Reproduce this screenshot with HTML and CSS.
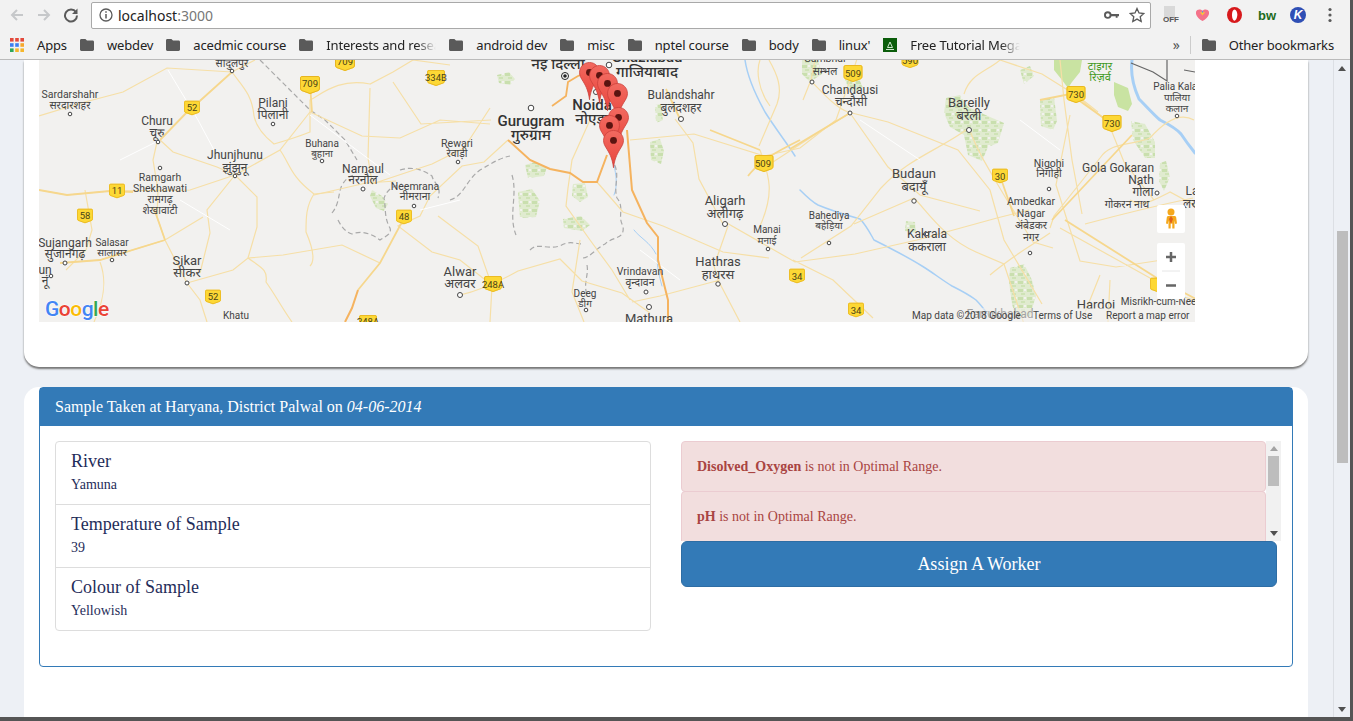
FILE: index.html
```html
<!DOCTYPE html>
<html lang="en">
<head>
    <meta charset="UTF-8">
    <meta name="viewport" content="width=device-width, initial-scale=1.0">
    <title>Water samples</title>
    <link rel="stylesheet" href="styles.css">
</head>
<body>
    <svg class="defs" width="0" height="0">
        <defs>
            <linearGradient id="pin-fill" x1="0" y1="0" x2="0" y2="1">
                <stop offset="0" stop-color="#f26a60"/>
                <stop offset="1" stop-color="#e8443c"/>
            </linearGradient>
            <pattern id="speck" width="9" height="8" patternUnits="userSpaceOnUse">
                <rect width="9" height="8" fill="#e0ebcf"/>
                <rect x="1" y="1" width="5" height="3" fill="#c9dfae"/>
                <rect x="4" y="5" width="4" height="2" fill="#cfe3b6"/>
                <rect x="7" y="1" width="2" height="2" fill="#f2f1ef"/>
            </pattern>
        </defs>
        <symbol id="folder" viewBox="0 0 14 12"><path d="M1.400 0h4l1.600 1.600h5.600c.8 0 1.400.6 1.400 1.400v7.600c0 .8-.6 1.400-1.400 1.400H1.400C.6 12 0 11.400 0 10.600V1.400C0 .6.600 0 1.400 0z" fill="#5a5a5a"/></symbol>
        <symbol id="shield" viewBox="0 0 20 18"><path d="M2 0h16c1 0 2 1 2 2v10c0 2-1 3-3 3.500L10 18 3 15.500C1 15 0 14 0 12V2C0 1 1 0 2 0z" fill="#fdd835"/><path d="M2 .5h16c.8 0 1.500.7 1.500 1.500v10c0 1.700-.8 2.600-2.600 3L10 17.500 3.100 15C1.300 14.600.5 13.700.5 12V2C.5 1.200 1.200.5 2 .5z" fill="none" stroke="#e6b422"/></symbol>
        <symbol id="pin" viewBox="0 0 22 40"><path d="M11 .5C5.200.5.500 5.200.500 11c0 3 1.100 5 2.700 7.700 2.700 4.400 6.500 10 7.800 21 1.300-11 5.100-16.600 7.800-21 1.600-2.700 2.700-4.700 2.700-7.700C21.500 5.200 16.800.5 11 .5z" fill="url(#pin-fill)" stroke="#c9403a" stroke-width=".8"/><circle cx="11" cy="11" r="3.600" fill="#5a1410"/></symbol>
    </svg>

    <header class="toolbar">
        <svg class="nav-icon nav-back" viewBox="0 0 16 16"><path d="M14 8H3M8 3 3 8l5 5" fill="none" stroke="#c6c8ca" stroke-width="2"/></svg>
        <svg class="nav-icon nav-forward" viewBox="0 0 16 16"><path d="M2 8h11M8 3l5 5-5 5" fill="none" stroke="#c6c8ca" stroke-width="2"/></svg>
        <svg class="nav-icon nav-reload" viewBox="0 0 16 16"><path d="M13 5.200A6 6 0 1 0 14 8.500" fill="none" stroke="#5a5a5a" stroke-width="2"/><path d="M14.500 1.500v5.500H9z" fill="#5a5a5a"/></svg>
        <div class="omnibox">
            <svg class="omni-info" viewBox="0 0 14 14"><circle cx="7" cy="7" r="6" fill="none" stroke="#5a5a5a" stroke-width="1.300"/><path d="M7 6v4.500M7 3.300v1.500" stroke="#5a5a5a" stroke-width="1.500"/></svg>
            <span class="omni-url">localhost<span class="omni-port">:3000</span></span>
            <svg class="omni-key" viewBox="0 0 16 10"><circle cx="4" cy="5" r="3" fill="none" stroke="#5a5a5a" stroke-width="2"/><path d="M7 4h9v2.200h-1.500V8h-2V6.200H7z" fill="#5a5a5a"/></svg>
            <svg class="omni-star" viewBox="0 0 16 16"><path d="m8 1.500 2 4.500 4.800.5-3.600 3.200 1 4.800L8 12.100l-4.200 2.400 1-4.800L1.200 6.500 6 6z" fill="none" stroke="#5a5a5a" stroke-width="1.300"/></svg>
        </div>
        <div class="extensions">
            <div class="ext-off"><span class="ext-off-page"></span><span class="ext-off-label">OFF</span></div>
            <svg class="ext-heart" viewBox="0 0 14 13"><path d="M0 3c1-3 5-3 7-1 2-2 6-2 7 1 1 4-3 8-7 10C3 11-1 7 0 3z" fill="#f4728a"/><path d="M4 3.500 7 7l3-3.500z" fill="#f9c23c"/><path d="M7 2v2" stroke="#4aa3df"/></svg>
            <svg class="ext-opera" viewBox="0 0 16 17"><ellipse cx="8" cy="8.500" rx="8" ry="8.500" fill="#d7191c"/><path d="M5.300 8.500C5.300 5 6.500 2.500 8 2.500c1.500 0 3 2.500 3 5.500 0 3.500-1.500 6.500-3 6.500S5.300 12 5.300 8.500z" fill="#fff"/></svg>
            <span class="ext-bw">bw</span>
            <span class="ext-k">K</span>
            <svg class="ext-menu" viewBox="0 0 4 16"><circle cx="2" cy="2.500" r="1.600"/><circle cx="2" cy="8" r="1.600"/><circle cx="2" cy="13.500" r="1.600"/></svg>
        </div>
    </header>

    <nav class="bookmarks">
        <a class="bookmark bookmark-apps">
            <svg class="apps-grid" viewBox="0 0 14 14">
                <rect width="3.600" height="3.600" fill="#e3493b"/><rect x="5.200" width="3.600" height="3.600" fill="#e3493b"/><rect x="10.400" width="3.600" height="3.600" fill="#e3493b"/>
                <rect y="5.200" width="3.600" height="3.600" fill="#3d7ff0"/><rect x="5.200" y="5.200" width="3.600" height="3.600" fill="#3d7ff0"/><rect x="10.400" y="5.200" width="3.600" height="3.600" fill="#f6a72c"/>
                <rect y="10.400" width="3.600" height="3.600" fill="#2fa75a"/><rect x="5.200" y="10.400" width="3.600" height="3.600" fill="#f6b72c"/><rect x="10.400" y="10.400" width="3.600" height="3.600" fill="#f6b72c"/>
            </svg>
            Apps
        </a>
        <a class="bookmark"><svg class="folder"><use href="#folder"/></svg>webdev</a>
        <a class="bookmark"><svg class="folder"><use href="#folder"/></svg>acedmic course</a>
        <a class="bookmark"><svg class="folder"><use href="#folder"/></svg><span class="fade">Interests and research</span></a>
        <a class="bookmark"><svg class="folder"><use href="#folder"/></svg>android dev</a>
        <a class="bookmark"><svg class="folder"><use href="#folder"/></svg>misc</a>
        <a class="bookmark"><svg class="folder"><use href="#folder"/></svg>nptel course</a>
        <a class="bookmark"><svg class="folder"><use href="#folder"/></svg>body</a>
        <a class="bookmark"><svg class="folder"><use href="#folder"/></svg>linux'</a>
        <a class="bookmark">
            <svg class="site-icon" viewBox="0 0 14 14"><rect width="14" height="14" fill="#0b5d0b"/><path d="M4.500 9.500 7 4l2.500 5.500zM3 11.500h8" fill="none" stroke="#cfe8cf"/></svg>
            <span class="fade">Free Tutorial Mega</span>
        </a>
        <span class="bookmarks-more">»</span>
        <span class="bookmarks-sep"></span>
        <a class="bookmark bookmark-other"><svg class="folder"><use href="#folder"/></svg>Other bookmarks</a>
    </nav>

    <div class="viewport">
        <main class="page">
            <section class="card card-map">
                <svg class="map" viewBox="39 60 1156 262" width="1156" height="262">
                    <rect x="39" y="60" width="1156" height="262" fill="#f2f1ef"/>

                    <!-- green -->
                    <g fill="url(#speck)">
                        <path d="M497 75l12-3 6 7-5 6-11-2zM525 165l10-3 12 5-3 9-16 2zM518 192l14-3 8 12-4 16-16 1zM573 184l12-1 3 14-8 5-8-6zM563 219l18-3 9 9-8 6-18-3zM650 142l10-3 4 12-3 13-10-4zM655 105l6-1 2 16-7 3zM372 190l10 6 6 8-4 7-8-3-6-12z"/>
                        <path d="M946 98l14-3 8 12 22 10 14 6-6 20-10 4-6 14-14-6-4-20-14-8-6-14zM1040 100l14-3 3 24-4 9-12-4zM1131 121l14 3 10 18 0 16-10 0-12-18zM1160 163l6-2 4 16-6 14-5-10zM906 221l9 1 1 11-11-2zM1010 268l14-4 8 16 4 16-6 20-14 2-4-14-3-22z"/>
                        <path d="M802 60h16l4 14-12 8-8-8zM845 70l12 4 6 14-10 4-8-10zM1020 70l10-4 4 10-10 8z"/>
                    </g>
                    <path d="M1054 60h28l-2 12-8 10-4 6-6-8-8-10zM1114 82l14 6 4 16-4 7-10-4-4-12z" fill="#c9e3a2"/>

                    <!-- rivers -->
                    <g fill="none" stroke="#a7cff5" stroke-linecap="round">
                        <path stroke-width="3" d="M1132 60c-2 16 2 28 7 39 8 8 14 15 21 21 8 4 16 8 21 14 4 6 10 14 14 19"/>
                        <path stroke-width="1.500" d="M745 60c2 14 10 34 20 52 10 16 24 34 30 44"/>
                        <path stroke-width="1.500" d="M800 190c6 6 12 12 18 15 14 6 28 10 42 14 6 6 10 14 14 21 16 8 32 16 48 26 10 6 20 14 30 20 8 4 16 8 24 14 6 6 10 12 14 17"/>
                        <path stroke-width="1" d="M614 165c2 10 4 20 0 30M634 230c6 8 16 12 22 24M658 252c-2 10 0 20 4 34"/>
                    </g>

                    <!-- state lines -->
                    <g fill="none" stroke="#a9a9a9" stroke-width="1.200" stroke-dasharray="5 3">
                        <path d="M260 60l15 15 15 15 20 20 15 10 20 20 12 20"/>
                        <path d="M332 213c8-10 6-20 10-28 4-6 6-8 12-10M338 220c4 8 8 12 14 14 10-4 20 0 28 6 6-4 12-6 10-12-6-10-4-20-6-30 4-10 10-12 18-14M400 170c12-4 24 0 32 6 2 8 10 10 6 22"/>
                        <path d="M450 200c14-4 16-20 30-30 14-8 20-12 30-14M512 175c6 20-4 40 4 60M530 250c8-8 16 0 30-4 10-6 14-2 24-2M583 258c6 0 14-10 22-14 8-8 20-4 18-18-6-10 2-18-6-28-4-12 4-24-4-36M587 265c2 10-4 18 0 30"/>
                    </g>
                    <path d="M1131 63l22 9 14 9V60M1184 70l11 2" fill="none" stroke="#666" stroke-width="1.200"/>

                    <!-- minor roads -->
                    <g fill="none" stroke="#f6dfa6" stroke-width="1.200">
                        <path d="M39 116l46-14 38-10 44-24 65 4 23-12M232 72c10 14 20 22 22 44 2 10 10 20 20 28 14-4 26-8 36-12l0-32c12-6 28-22 60-16l23-12 20-12 37 5"/>
                        <path d="M280 150c10 14 10 26 34 44l20-2M314 194c-8 12-8 24-8 38 6 14 10 28 4 34M160 140l13 12 44 15 18 8 45-25 30-38"/>
                        <path d="M235 175l22 22v30l-9 31M235 175l-28 35 3 23-10 40M39 190l28 5 43-4 80-1 45-15"/>
                        <path d="M157 142l-4 18 5 30-1 27 8 23 22 43 13 17 7 22M63 263l37-3 65-20 38-23M187 283l46-13 15-12 35-3 59-10 38 18M248 258c14 10 20 12 18 24 10 14 16 26 26 40"/>
                        <path d="M85 190l7 40-6 20-20 20M100 262c6 16 6 34-6 60M314 195l52-12 30-2M370 88l-2 70 4 24M310 112l52 24 38 2 40-18 50 4M393 82l28 42 70-4M490 108l-26 40-32 16-60 20"/>
                        <path d="M508 140l-24 22-22 4-32 30-10 20-22 10 34 26 28 8 28 22M438 216l40 30 14 40-2 36M460 295c18-4 40-14 58-24l42-12 22 22 40 12 28 20M580 240l-8 52 12 30M590 120l-18 40-4 28-2 18 24 34 22 30 18 30"/>
                        <path d="M597 182l26 30 40 14 60 26 46 6M675 119l18 24 6 36 24 45M630 140l64-6 70 22 36-8 36-28 14-40 8-24 18-34M728 226l-14 40 4 14 22 42M720 280l-60 16-28 6M725 222l70 40 60-8 62-14 80-22 32-8M760 150c8 24 16 40 0 76M793 260l40 20 40 38M810 80c14 14 26 28 38 32l40 10 70 28 32 40 14 50 38 64"/>
                        <path d="M850 113c-30 18-60 38-88 56M850 113l38 54 32 28 60 16M769 60c8 14 14 28 8 44l-18 42M969 128c-30 22-60 30-88 60l-30 38-50 32M914 198l-60 26M914 198c14 14 30 40 62 54l28 12 20 60M969 128c8 24 22 44 26 52l12 20 26 42 20 6M1000 60c-14 12-30 14-36 34M1000 60l42 14 32 20 34 28 16 40 30 38M1070 115l-14 70 12 38 12 38 36 6 66-10M1060 60l4 40 8 60 10 54M1050 233c-14 10-34 20-60 42M1085 224c30-8 60-16 108-26M1060 228l90 50 18 14 26 8M1194 120c-14-8-30 2-44 18-20 8-40 4-50 20l-46 58-4 12"/>
                        <path d="M1110 280l-2 42M1100 275l-16 40M1130 200c12 8 24 0 40-8l26 14M1070 90l28 22"/>
                        <path d="M760 60c-4 10-2 30 10 46M815 60l-4 20-8 20"/>
                    </g>
                    <g fill="none" stroke="#fff" stroke-width="1">
                        <path d="M168 70l30 50 16 30M120 160l40-20M180 200l50 30M310 115l40 30 40 30M640 250l40 30M420 210l40-10M860 120l60 40M1020 120l40 30"/>
                    </g>

                    <!-- main roads -->
                    <g fill="none" stroke="#f6d78d" stroke-width="1.800">
                        <path d="M403 220l-23 43-22 27M39 190l28 5 43-4 23 1M191 108l-31 32M192 108l40-36M60 263l40-3 65-20M165 240l-8-23M157 217l-4-10M310 84l2 28M1000 176l14 40M1065 220l95 60 38 20M1132 135l-80 85M800 140c-20 10-40 20-52 36M850 113c-30 18-50 30-60 36M680 119l-14-30M760 150l-50-20M1040 100l30-6 42 30"/>
                    </g>
                    <g fill="none" stroke="#f5b35f" stroke-width="2">
                        <path d="M508 140l22 20 20 9 20 4 13 9 14 0 10-27M627 130l5 60 15 33 11 14 0 23 10 40v32M358 290l-6 18-7 14"/>
                    </g>
                    <path d="M596 76c-8-4-14-2-18 0l-10 6-2 14-14 10" fill="none" stroke="#f5b35f" stroke-width="1.800"/>

                    <!-- places -->
                    <g fill="#fff" stroke="#444" stroke-width="1">
                        <circle cx="70" cy="114" r="1.800"/><circle cx="273" cy="124" r="1.800"/><circle cx="158" cy="142" r="1.800"/><circle cx="160" cy="168" r="1.800"/>
                        <circle cx="235" cy="176" r="1.800"/><circle cx="322" cy="161" r="1.800"/><circle cx="363" cy="189" r="2"/><circle cx="414" cy="206" r="1.800"/>
                        <circle cx="65" cy="263" r="2"/><circle cx="112" cy="260" r="1.800"/><circle cx="187" cy="283" r="2"/><circle cx="51" cy="276" r="1.800"/><circle cx="232" cy="71" r="1.800"/>
                        <circle cx="531" cy="108" r="2.800"/><circle cx="609" cy="65" r="2.800"/><circle cx="596" cy="92" r="2.500"/><circle cx="681" cy="119" r="2.500"/><circle cx="458" cy="162" r="1.800"/>
                        <circle cx="725" cy="224" r="2.500"/><circle cx="768" cy="249" r="1.800"/><circle cx="718" cy="284" r="2.200"/><circle cx="460" cy="295" r="2.500"/><circle cx="646" cy="292" r="2"/>
                        <circle cx="586" cy="310" r="1.800"/><circle cx="649" cy="307" r="2.500"/><circle cx="812" cy="82" r="2"/><circle cx="850" cy="113" r="2"/><circle cx="969" cy="130" r="2.500"/>
                        <circle cx="914" cy="201" r="2.200"/><circle cx="829" cy="243" r="1.800"/><circle cx="927" cy="234" r="1.800"/><circle cx="1049" cy="189" r="1.800"/>
                        <circle cx="1157" cy="193" r="2"/><circle cx="1030" cy="253" r="1.800"/><circle cx="1177" cy="116" r="1.800"/>
                    </g>
                    <circle cx="565" cy="76" r="3.500" fill="#fff" stroke="#222" stroke-width="1"/><circle cx="565" cy="76" r="1.800" fill="#222"/>

                    <!-- road numbers -->
                    <use href="#shield" x="335" y="53" width="20" height="18"/><text class="shield-no" x="345" y="65">709</text>
                    <use href="#shield" x="300" y="76" width="20" height="18"/><text class="shield-no" x="310" y="87">709</text>
                    <use href="#shield" x="423" y="70" width="26" height="16"/><text class="shield-no" x="436" y="81">334B</text>
                    <use href="#shield" x="184" y="100" width="16" height="16"/><text class="shield-no" x="192" y="111">52</text>
                    <use href="#shield" x="109" y="183" width="16" height="16"/><text class="shield-no" x="117" y="194">11</text>
                    <use href="#shield" x="77" y="208" width="16" height="16"/><text class="shield-no" x="85" y="219">58</text>
                    <use href="#shield" x="205" y="289" width="16" height="16"/><text class="shield-no" x="213" y="300">52</text>
                    <use href="#shield" x="396" y="209" width="16" height="16"/><text class="shield-no" x="404" y="220">48</text>
                    <use href="#shield" x="480" y="276" width="26" height="16"/><text class="shield-no" x="493" y="288">248A</text>
                    <use href="#shield" x="355" y="315" width="26" height="16"/><text class="shield-no" x="368" y="325">248A</text>
                    <use href="#shield" x="754" y="155" width="20" height="17"/><text class="shield-no" x="763" y="167">509</text>
                    <use href="#shield" x="843" y="65" width="20" height="17"/><text class="shield-no" x="853" y="77">509</text>
                    <use href="#shield" x="900" y="53" width="20" height="15"/><text class="shield-no" x="910" y="64">590</text>
                    <use href="#shield" x="1066" y="86" width="20" height="17"/><text class="shield-no" x="1076" y="98">730</text>
                    <use href="#shield" x="1102" y="115" width="20" height="17"/><text class="shield-no" x="1112" y="127">730</text>
                    <use href="#shield" x="992" y="168" width="16" height="16"/><text class="shield-no" x="1000" y="180">30</text>
                    <use href="#shield" x="789" y="268" width="16" height="16"/><text class="shield-no" x="797" y="280">34</text>
                    <use href="#shield" x="848" y="302" width="16" height="16"/><text class="shield-no" x="856" y="314">34</text>
                    <use href="#shield" x="1150" y="277" width="16" height="16"/>

                    <!-- labels -->
                    <g class="map-labels">
                        <text class="lbl" x="232" y="67">सादुलपुर</text>
                        <text class="lbl" x="70" y="98">Sardarshahr</text><text class="lbl" x="70" y="109">सरदारशहर</text>
                        <text class="lbl-md" x="273" y="107">Pilani</text><text class="lbl-md" x="273" y="119">पिलानी</text>
                        <text class="lbl-md" x="157" y="125">Churu</text><text class="lbl-md" x="157" y="137">चूरु</text>
                        <text class="lbl-md" x="235" y="159">Jhunjhunu</text><text class="lbl-md" x="235" y="172">झुंझुनू</text>
                        <text class="lbl-sm" x="322" y="147">Buhana</text><text class="lbl-sm" x="322" y="157">बुहाना</text>
                        <text class="lbl-md" x="363" y="173">Narnaul</text><text class="lbl-md" x="363" y="184">नरनौल</text>
                        <text class="lbl" x="415" y="190">Neemrana</text><text class="lbl" x="415" y="200">नीमराना</text>
                        <text class="lbl" x="160" y="181">Ramgarh</text><text class="lbl" x="160" y="192">Shekhawati</text><text class="lbl" x="160" y="203">रामगढ़</text><text class="lbl" x="160" y="214">शेखावाटी</text>
                        <text class="lbl-md" x="65" y="247">Sujangarh</text><text class="lbl-md" x="65" y="258">सुजानगढ़</text>
                        <text class="lbl-sm" x="112" y="246">Salasar</text><text class="lbl-sm" x="112" y="256">सालासर</text>
                        <text class="lbl-md" x="45" y="274">un</text><text class="lbl-md" x="45" y="285">नूं</text>
                        <text class="lbl-lg" x="187" y="265">Sikar</text><text class="lbl-lg" x="187" y="277">सीकर</text>
                        <text class="lbl-sm" x="236" y="319">Khatu</text>
                        <text class="lbl-city" x="531" y="126">Gurugram</text><text class="lbl-city" x="531" y="140">गुरुग्राम</text>
                        <text class="lbl-city" x="592" y="110">Noida</text><text class="lbl-city" x="592" y="124">नोएडा</text>
                        <text class="lbl-city" x="558" y="69">नई दिल्ली</text>
                        <text class="lbl-city" x="647" y="62">Ghaziabad</text><text class="lbl-city" x="647" y="77">गाजियाबाद</text>
                        <text class="lbl-md" x="681" y="99">Bulandshahr</text><text class="lbl-md" x="681" y="112">बुलंदशहर</text>
                        <text class="lbl" x="457" y="147">Rewari</text><text class="lbl" x="457" y="157">रेवाड़ी</text>
                        <text class="lbl-lg" x="725" y="205">Aligarh</text><text class="lbl-lg" x="725" y="218">अलीगढ़</text>
                        <text class="lbl-sm" x="767" y="233">Manai</text><text class="lbl-sm" x="767" y="244">मनाई</text>
                        <text class="lbl-lg" x="718" y="266">Hathras</text><text class="lbl-lg" x="718" y="279">हाथरस</text>
                        <text class="lbl-lg" x="460" y="276">Alwar</text><text class="lbl-lg" x="460" y="288">अलवर</text>
                        <text class="lbl" x="640" y="275">Vrindavan</text><text class="lbl" x="640" y="286">वृन्दावन</text>
                        <text class="lbl-sm" x="585" y="297">Deeg</text><text class="lbl-sm" x="585" y="307">डीग</text>
                        <text class="lbl-lg" x="649" y="323">Mathura</text>
                        <text class="lbl" x="825" y="62">Sambhal</text><text class="lbl" x="825" y="75">सम्भल</text>
                        <text class="lbl-md" x="850" y="94">Chandausi</text><text class="lbl-md" x="851" y="106">चन्दौसी</text>
                        <text class="lbl-lg" x="969" y="107">Bareilly</text><text class="lbl-lg" x="969" y="120">बरेली</text>
                        <text class="lbl-lg" x="914" y="178">Budaun</text><text class="lbl-lg" x="914" y="191">बदायूँ</text>
                        <text class="lbl-sm" x="829" y="219">Bahediya</text><text class="lbl-sm" x="829" y="229">बहेड़िया</text>
                        <text class="lbl-md" x="927" y="238">Kakrala</text><text class="lbl-md" x="927" y="251">ककराला</text>
                        <text class="lbl" x="1049" y="167">Nigohi</text><text class="lbl" x="1049" y="177">निगोही</text>
                        <text class="lbl-md" x="1118" y="172">Gola Gokaran</text><text class="lbl-md" x="1141" y="184">Nath</text><text class="lbl-md" x="1143" y="196">गोला</text><text class="lbl" x="1127" y="208">गोकरन नाथ</text>
                        <text class="lbl" x="1031" y="205">Ambedkar</text><text class="lbl" x="1031" y="217">Nagar</text><text class="lbl" x="1031" y="229">अंबेडकर</text><text class="lbl" x="1031" y="241">नगर</text>
                        <text class="lbl-lg" x="1096" y="309">Hardoi</text>
                        <text class="lbl-md" x="1000" y="318">Farrukhabad</text>
                        <text class="lbl-sm" x="1170" y="305">Misrikh-cum-Neemsar</text>
                        <text class="lbl-sm" x="1178" y="90">Palia Kalan</text><text class="lbl-sm" x="1177" y="101">पालिया</text><text class="lbl-sm" x="1177" y="112">कलान</text>
                        <text class="lbl-park" x="1100" y="70">टाइगर</text><text class="lbl-park" x="1100" y="81">रिज़र्व</text>
                        <text class="lbl-md" x="1192" y="195">La</text><text class="lbl-md" x="1192" y="208">लख</text>
                    </g>

                    <!-- markers -->
                    <use href="#pin" x="579" y="62" width="21" height="38"/>
                    <use href="#pin" x="589" y="65" width="21" height="38"/>
                    <use href="#pin" x="597" y="73" width="21" height="38"/>
                    <use href="#pin" x="607" y="83" width="21" height="38"/>
                    <use href="#pin" x="608" y="107" width="21" height="38"/>
                    <use href="#pin" x="599" y="115" width="21" height="38"/>
                    <use href="#pin" x="603" y="130" width="21" height="38"/>

                    <!-- google controls -->
                    <text class="gm-logo" x="45" y="316"><tspan fill="#4285f4">G</tspan><tspan fill="#ea4335">o</tspan><tspan fill="#fbbc05">o</tspan><tspan fill="#4285f4">g</tspan><tspan fill="#34a853">l</tspan><tspan fill="#ea4335">e</tspan></text>

                    <rect x="908" y="308" width="287" height="14" fill="#f2f1ef" opacity=".55"/>
                    <text class="gm-attr" x="912" y="319">Map data ©2018 Google</text>
                    <text class="gm-attr" x="1033" y="319">Terms of Use</text>
                    <text class="gm-attr" x="1106" y="319">Report a map error</text>

                    <rect x="1157" y="205" width="28" height="28" rx="2" fill="#fff"/>
                    <circle cx="1171" cy="212" r="3.500" fill="#f5a81c"/>
                    <path d="M1167.500 216h7c1 0 1.500.5 1.700 1.500l.8 6-1.800.5-.7-3.500v8h-2.200v-5h-1.600v5h-2.200v-8l-.7 3.500-1.800-.5.800-6c.2-1 .7-1.500 1.700-1.500z" fill="#f5a81c"/>
                    <path d="M1171 216l2 3-2 5-2-5z" fill="#e0611b"/>
                    <rect x="1157" y="243" width="28" height="56" rx="2" fill="#fff"/>
                    <path d="M1162 271h18" stroke="#e6e6e6"/>
                    <path d="M1166 257h10M1171 252v10M1166 285.500h10" stroke="#666" stroke-width="2.500"/>
                </svg>
            </section>

            <section class="card card-sample">
                <div class="panel">
                    <h3 class="panel-heading">Sample Taken at Haryana, District Palwal on <em>04-06-2014</em></h3>
                    <div class="panel-body">
                        <ul class="list-group">
                            <li class="list-item"><h4>River</h4><p>Yamuna</p></li>
                            <li class="list-item"><h4>Temperature of Sample</h4><p>39</p></li>
                            <li class="list-item"><h4>Colour of Sample</h4><p>Yellowish</p></li>
                        </ul>
                        <div class="side">
                            <div class="alerts">
                                <div class="alerts-list">
                                    <div class="alert"><strong>Disolved_Oxygen</strong> is not in Optimal Range.</div>
                                    <div class="alert"><strong>pH</strong> is not in Optimal Range.</div>
                                </div>
                                <div class="mini-scroll">
                                    <span class="arrow-up"></span>
                                    <span class="mini-thumb"></span>
                                    <span class="arrow-down"></span>
                                </div>
                            </div>
                            <button class="btn-assign">Assign A Worker</button>
                        </div>
                    </div>
                </div>
            </section>
        </main>
        <div class="page-scroll">
            <span class="arrow-up"></span>
            <span class="page-thumb"></span>
            <span class="arrow-down"></span>
        </div>
    </div>
</body>
</html>
```

FILE: styles.css
```css
* {
    box-sizing: border-box;
}
html, body {
    height: 100%;
}
body {
    margin: 0;
    display: flex;
    flex-direction: column;
    overflow: hidden;
    font-family: "Liberation Serif", serif;
    background: #edf0f5;
    border-right: 3px solid #555;
    border-bottom: 4px solid #555;
}
.defs {
    position: absolute;
}

/* browser chrome */
.toolbar {
    height: 30px;
    flex: none;
    display: flex;
    align-items: center;
    background: #f2f2f2;
    padding-left: 9px;
}
.nav-icon {
    width: 16px;
    height: 16px;
    margin-right: 11px;
}
.nav-reload {
    margin-right: 12px;
}
.omnibox {
    width: 1060px;
    height: 27px;
    display: flex;
    align-items: center;
    background: #fff;
    border: 1px solid #a9a9a9;
    border-radius: 2px;
    padding: 0 5px 0 7px;
    font-family: "Noto Sans", sans-serif;
    font-size: 14px;
    color: #222;
}
.omni-info {
    width: 14px;
    height: 14px;
    margin-right: 5px;
}
.omni-url {
    flex: 1;
}
.omni-port {
    color: #777;
}
.omni-key {
    width: 15px;
    height: 10px;
    margin-right: 10px;
}
.omni-star {
    width: 16px;
    height: 16px;
}
.extensions {
    display: flex;
    align-items: center;
    flex: 1;
    padding-left: 12px;
}
.ext-off {
    width: 15px;
    height: 18px;
    position: relative;
    flex: none;
}
.ext-off-page {
    display: block;
    width: 11px;
    height: 13px;
    margin-left: 1px;
    background: #d9d9d9;
}
.ext-off-label {
    position: absolute;
    left: 0;
    top: 9px;
    font: bold 8px "Liberation Sans", sans-serif;
    color: #555;
}
.ext-heart {
    width: 13px;
    height: 12px;
    margin-left: 18px;
    flex: none;
}
.ext-opera {
    width: 15px;
    height: 16px;
    margin-left: 18px;
    flex: none;
}
.ext-bw {
    width: 17px;
    margin-left: 16px;
    font: bold 13px "Liberation Sans", sans-serif;
    color: #1d6b1d;
}
.ext-k {
    width: 16px;
    height: 16px;
    margin-left: 15px;
    border-radius: 50%;
    background: #2f4fb5;
    color: #fff;
    font: italic bold 12px/16px "Liberation Sans", sans-serif;
    text-align: center;
    flex: none;
}
.ext-menu {
    width: 4px;
    height: 16px;
    margin-left: 22px;
    fill: #5a5a5a;
    flex: none;
}

.bookmarks {
    height: 30px;
    flex: none;
    display: flex;
    align-items: center;
    gap: 13px;
    padding-left: 10px;
    background: #f2f2f2;
    border-bottom: 1px solid #bbb;
    font-family: "Noto Sans", sans-serif;
    font-size: 13px;
    letter-spacing: -.15px;
    color: #222;
}
.bookmark {
    display: flex;
    align-items: center;
    gap: 13px;
    white-space: nowrap;
}
.apps-grid, .site-icon {
    width: 14px;
    height: 14px;
    flex: none;
}
.folder {
    width: 14px;
    height: 12px;
    flex: none;
}
.fade {
    display: block;
    width: 110px;
    overflow: hidden;
    -webkit-mask-image: linear-gradient(90deg, #000 82%, transparent);
    mask-image: linear-gradient(90deg, #000 82%, transparent);
}
.bookmarks-more {
    margin-left: auto;
    color: #555;
    font-size: 14px;
}
.bookmarks-sep {
    width: 1px;
    height: 18px;
    margin-left: -3px;
    background: #ccc;
}
.bookmark-other {
    margin-left: -2px;
    margin-right: 16px;
}

/* page */
.viewport {
    flex: 1;
    min-height: 0;
    display: flex;
}
.page {
    flex: 1;
    min-width: 0;
    padding: 0 25px 0 24px;
    display: flex;
    flex-direction: column;
    gap: 20px;
    overflow: hidden;
}
.card {
    background: #fff;
    padding: 0 15px;
}
.card-map {
    height: 307px;
    flex: none;
    border-radius: 0 0 15px 15px;
    box-shadow: 0 2px 2px #777;
}
.map {
    display: block;
}
.card-sample {
    flex: 1;
    border-radius: 15px 15px 0 0;
}

/* map text */
.map text {
    text-anchor: middle;
    font-family: Roboto, "Noto Sans Devanagari", "Noto Sans", sans-serif;
    fill: #444;
}
.lbl-sm { font-size: 10px; }
.lbl { font-size: 10.500px; }
.lbl-md { font-size: 12px; }
.lbl-lg { font-size: 13px; }
.map .lbl-city {
    font-size: 15px;
    font-weight: 500;
    fill: #333;
}
.map .lbl-park {
    font-size: 11px;
    fill: #3f9a1e;
}
.map .shield-no {
    font-size: 9.500px;
    fill: #4a4418;
}
.map .gm-logo {
    text-anchor: start;
    font-size: 21px;
    font-weight: 500;
    paint-order: stroke;
    stroke: #fff;
    stroke-width: 1px;
    letter-spacing: -.5px;
}
.map .gm-attr {
    text-anchor: start;
    font-size: 10px;
    fill: #444;
}

/* sample panel */
.panel {
    height: 280px;
    border: 1px solid #337ab7;
    border-radius: 4px;
}
.panel-heading {
    margin: 0;
    height: 38px;
    padding: 10px 15px;
    background: #337ab7;
    color: #fff;
    font-size: 16px;
    font-weight: 400;
    line-height: 18px;
}
.panel-body {
    display: flex;
    gap: 30px;
    padding: 15px;
}
.list-group {
    width: 596px;
    height: 190px;
    flex: none;
    margin: 0;
    padding: 0;
    list-style: none;
    border: 1px solid #ddd;
    border-radius: 4px;
}
.list-item {
    height: 63px;
    padding: 9px 15px;
    border-bottom: 1px solid #ddd;
    color: #1f2d5a;
}
.list-item:last-child {
    border-bottom: 0;
}
.list-item h4 {
    margin: 0 0 4px;
    font-size: 18px;
    font-weight: 400;
    line-height: 20px;
}
.list-item p {
    margin: 0;
    font-size: 14px;
    line-height: 20px;
}
.side {
    flex: 1;
    min-width: 0;
}
.alerts {
    height: 100px;
    margin-right: -4px;
    display: flex;
    overflow: hidden;
}
.alerts-list {
    flex: 1;
}
.alert {
    height: 51px;
    margin-bottom: -1px;
    padding: 15px;
    background: #f2dede;
    border: 1px solid #ebccd1;
    border-radius: 4px;
    color: #a94442;
    font-size: 14px;
    line-height: 20px;
}
.alert + .alert {
    height: 60px;
}
.alert strong {
    font-weight: 700;
}
.mini-scroll, .page-scroll {
    flex: none;
    display: flex;
    flex-direction: column;
    align-items: center;
    background: #f1f1f1;
}
.mini-scroll {
    width: 15px;
    padding: 5px 0;
}
.arrow-up, .arrow-down {
    width: 0;
    height: 0;
    border-left: 4px solid transparent;
    border-right: 4px solid transparent;
}
.arrow-up {
    border-bottom: 5px solid #a3a3a3;
}
.arrow-down {
    margin-top: auto;
    border-top: 5px solid #505050;
}
.mini-thumb {
    width: 11px;
    height: 30px;
    margin-top: 5px;
    background: #bdbdbd;
}
.btn-assign {
    display: block;
    width: 100%;
    height: 46px;
    background: #337ab7;
    border: 1px solid #2e6da4;
    border-radius: 6px;
    color: #fff;
    font-family: inherit;
    font-size: 18px;
}
.page-scroll {
    width: 17px;
    padding: 6px 0 5px;
    background: #edf0f5;
    border-left: 1px solid #dcdfe4;
}
.page-scroll .arrow-up {
    border-bottom-color: #505050;
}
.page-thumb {
    width: 11px;
    height: 232px;
    margin-top: 160px;
    background: #bdbdbd;
}
```
